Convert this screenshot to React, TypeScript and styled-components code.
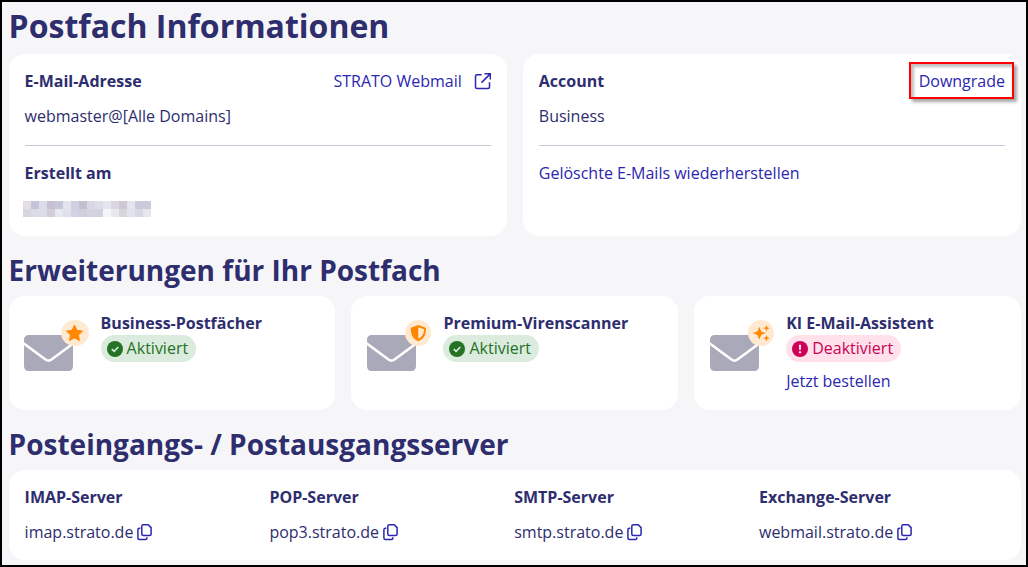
import React from 'react';
import styled, { createGlobalStyle } from 'styled-components';

const GlobalStyle = createGlobalStyle`
  *, *::after { box-sizing: border-box; }
  html, body { margin: 0; padding: 0; }
  body { font-family: "Open Sans", sans-serif; font-size: 16px; line-height: 24px; color: #2e2d6e; overflow: hidden; }
  h1, h2, h3, p { margin: 0; }
`;

const Page = styled.main`
  width: 1028px;
  height: 567px;
  padding: 0 5px 0 6.6px;
  border: 2px solid #000;
  background: #f6f6f9;
  overflow: hidden;
`;

const Title = styled.h1`
  height: 52px;
  padding-top: 2px;
  font-size: 32px;
  line-height: 44px;
  font-weight: 700;
  white-space: nowrap;
`;

const SectionTitle = styled.h2`
  height: 60px;
  padding-top: 15px;
  font-size: 28px;
  line-height: 38px;
  font-weight: 700;
  white-space: nowrap;
`;

const Columns = styled.div<{ $count: number }>`
  display: grid;
  grid-template-columns: repeat(${(p) => p.$count}, 1fr);
  gap: 16px;
`;

const Card = styled.section<{ $height: number }>`
  height: ${(p) => p.$height}px;
  padding: 15px 16px;
  border-radius: 16px;
  background: #fff;
`;

const CardRow = styled.div`
  display: flex;
  justify-content: space-between;
  align-items: center;
  height: 24px;
`;

const Label = styled.h3`
  font-size: 16px;
  line-height: 24px;
  font-weight: 700;
  white-space: nowrap;
`;

const Value = styled.p`
  display: flex;
  align-items: center;
  gap: 3.5px;
  margin-top: 11px;
  white-space: nowrap;
`;

const Divider = styled.hr`
  height: 1px;
  margin: 17px 0 15px;
  border: 0;
  background: #c8c7d5;
`;

const Link = styled.a`
  display: inline-flex;
  align-items: center;
  gap: 12px;
  color: #2b27b0;
  text-decoration: none;
  white-space: nowrap;
`;

const Marked = styled.span`
  position: relative;

  &::after {
    content: '';
    position: absolute;
    left: -10px;
    top: -7px;
    width: 105px;
    height: 37px;
    border: 2px solid #f00;
    box-shadow: 3px 3px 3px rgba(0, 0, 0, 0.35), inset 3px 3px 3px rgba(0, 0, 0, 0.25);
  }
`;

const Mosaic = styled.div`
  display: grid;
  grid-template-columns: repeat(16, 8px);
  grid-auto-rows: 8px;
  margin: 16px 0 0 -1.6px;
`;

const Tile = styled.i<{ $color: string }>`
  background: ${(p) => p.$color};
`;

const Extension = styled(Card)`
  display: flex;
  gap: 12px;
`;

const ExtensionIcon = styled.svg`
  flex: none;
  display: block;
  width: 65px;
  height: 54px;
  margin: 9px 0 0 -0.6px;
`;

const ExtensionBody = styled.div`
  display: flex;
  flex-direction: column;
  align-items: flex-start;
  margin-left: -0.4px;
`;

const Pill = styled.span<{ $active: boolean }>`
  display: flex;
  align-items: center;
  gap: 4px;
  height: 27px;
  padding: 0 8px 0 6px;
  border-radius: 14px;
  color: ${(p) => (p.$active ? '#257225' : '#cc0055')};
  background: ${(p) => (p.$active ? '#dbebdd' : '#ffe0eb')};
  white-space: nowrap;
`;

const PillText = styled.span`
  margin-top: -2px;
`;

const OrderLink = styled(Link)`
  margin-top: 7px;
`;

const Servers = styled(Card)`
  display: grid;
  grid-template-columns: repeat(4, 244.8px);
`;

const Glyph = styled.svg`
  display: block;
  flex: none;
`;

const tiles = [
  '#e3dfe4', '#c3c4d7', '#dcdde8', '#c6c1d0', '#c5c6d7', '#e2e5ee', '#cfd0e0', '#c4bfcf',
  '#d9d7e2', '#dcdfe9', '#e2e6ef', '#d8d7e2', '#cdc7d3', '#e1e5ed', '#cbcbdb', '#c9cadb',
  '#d7d6e1', '#dcdce7', '#dcdce7', '#d1ceda', '#e8e8f0', '#dfe0e9', '#d1d3e2', '#cfcfdd',
  '#d4d3df', '#d1d2df', '#f5f6fa', '#e8e8ef', '#d7d4dc', '#dfe3ec', '#d5d7e5', '#e8e7ef',
];

const ExternalIcon = () => (
  <Glyph width="17" height="17" viewBox="0 0 17 17" fill="none" stroke="#2b27b0" strokeWidth="1.5">
    <path d="M7.7 1.7H3Q1.5 1.7 1.5 3.2V14Q1.5 15.5 3 15.5H14Q15.5 15.5 15.5 14V9.2" />
    <path d="M10.5 .75H16.3V6.5M16 1.1L7.5 9.6" />
  </Glyph>
);

const CopyIcon = () => (
  <Glyph width="15" height="17" viewBox="0 0 15 17" fill="none" stroke="#2b27b0" strokeWidth="1.5">
    <path d="M6.3 .75H11.2L14.1 3.6V10Q14.1 11.5 12.6 11.5H6.3Q4.8 11.5 4.8 10V2.25Q4.8 .75 6.3 .75Z" />
    <path d="M3.4 4.3H2.4Q.9 4.3 .9 5.8V14Q.9 15.5 2.4 15.5H8.4Q9.9 15.5 9.9 14V13.2" />
  </Glyph>
);

type Kind = 'star' | 'shield' | 'sparkles';

const badges: Record<Kind, React.ReactNode> = {
  star: (
    <path
      d="M50.5 5.3L53 10.3L58.5 11.1L54.5 15L55.4 20.5L50.5 17.9L45.6 20.5L46.5 15L42.5 11.1L48 10.3Z"
      strokeWidth="1"
      strokeLinejoin="round"
      stroke="#ff8800"
    />
  ),
  shield: (
    <path
      fillRule="evenodd"
      d="M51.3 5L58.3 7.5Q59 7.8 59 8.5C59 14 57.2 18.5 52 21Q51.3 21.3 50.6 21C45.5 18.5 43.7 14 43.7 8.5Q43.7 7.8 44.4 7.5ZM51.3 7.2V18.8C55.5 16.6 57 13.3 57 9.2Z"
    />
  ),
  sparkles: (
    <path d="M49.3 6.8L51.2 11.4L55.8 13.1L51.2 14.9L49.3 19.4L47.4 14.9L42.8 13.1L47.4 11.4ZM56.5 4.9L57.4 7.3L59.8 8.2L57.4 9.1L56.5 11.5L55.6 9.1L53.2 8.2L55.6 7.3ZM56.5 15L57.4 17.3L59.8 18.2L57.4 19.1L56.5 21.4L55.6 19.1L53.2 18.2L55.6 17.3Z" />
  ),
};

const MailIcon = ({ kind }: { kind: Kind }) => (
  <ExtensionIcon viewBox="0 0 65 54">
    <path d="M5 15H44Q49 15 49 20V46Q49 51 44 51H5Q0 51 0 46V20Q0 15 5 15Z" fill="#aaa9b9" />
    <path d="M-.5 23.2L21.5 39.5Q24.5 41.8 27.5 39.5L49.5 23.2" fill="none" stroke="#fff" strokeWidth="2.5" />
    <ellipse cx="51" cy="13" rx={kind === 'star' ? 14 : 13} ry="13" fill="#ffe9d1" />
    <g fill="#ff8800">{badges[kind]}</g>
  </ExtensionIcon>
);

const StatusIcon = ({ active }: { active: boolean }) => (
  <Glyph width="16" height="16" viewBox="0 0 16 16">
    <circle cx="8" cy="8" r="8" fill={active ? '#257225' : '#cc0055'} />
    {active ? (
      <path d="M4.8 8.1L7.1 10.3L11.3 6" fill="none" stroke="#dbebdd" strokeWidth="1.6" />
    ) : (
      <path d="M6.9 3.8H9.1L8.8 9H7.2ZM6.9 10.3H9.1V12.3H6.9Z" fill="#ffe0eb" />
    )}
  </Glyph>
);

const extensions: { name: string; kind: Kind; active: boolean }[] = [
  { name: 'Business-Postfächer', kind: 'star', active: true },
  { name: 'Premium-Virenscanner', kind: 'shield', active: true },
  { name: 'KI E-Mail-Assistent', kind: 'sparkles', active: false },
];

const servers = [
  ['IMAP-Server', 'imap.strato.de'],
  ['POP-Server', 'pop3.strato.de'],
  ['SMTP-Server', 'smtp.strato.de'],
  ['Exchange-Server', 'webmail.strato.de'],
];

export default function App() {
  return (
    <>
      <GlobalStyle />
      <Page>
        <Title>Postfach Informationen</Title>
        <Columns $count={2}>
          <Card $height={182}>
            <CardRow>
              <Label>E-Mail-Adresse</Label>
              <Link>STRATO Webmail <ExternalIcon /></Link>
            </CardRow>
            <Value>webmaster@[Alle Domains]</Value>
            <Divider />
            <Label>Erstellt am</Label>
            <Mosaic>{tiles.map((color, i) => <Tile key={i} $color={color} />)}</Mosaic>
          </Card>
          <Card $height={182}>
            <CardRow>
              <Label>Account</Label>
              <Marked><Link>Downgrade</Link></Marked>
            </CardRow>
            <Value>Business</Value>
            <Divider />
            <Link>Gelöschte E-Mails wiederherstellen</Link>
          </Card>
        </Columns>
        <SectionTitle>Erweiterungen für Ihr Postfach</SectionTitle>
        <Columns $count={3}>
          {extensions.map((item) => (
            <Extension key={item.name} $height={114}>
              <MailIcon kind={item.kind} />
              <ExtensionBody>
                <Label>{item.name}</Label>
                <Pill $active={item.active}>
                  <StatusIcon active={item.active} />
                  <PillText>{item.active ? 'Aktiviert' : 'Deaktiviert'}</PillText>
                </Pill>
                {!item.active && <OrderLink>Jetzt bestellen</OrderLink>}
              </ExtensionBody>
            </Extension>
          ))}
        </Columns>
        <SectionTitle>Posteingangs- / Postausgangsserver</SectionTitle>
        <Servers $height={90}>
          {servers.map(([name, host]) => (
            <div key={name}>
              <Label>{name}</Label>
              <Value>{host}<CopyIcon /></Value>
            </div>
          ))}
        </Servers>
      </Page>
    </>
  );
}
